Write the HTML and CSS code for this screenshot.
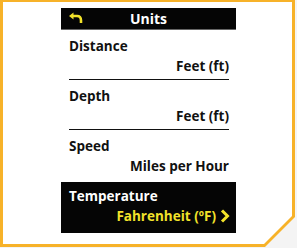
FILE: index.html
```html
<!DOCTYPE html>
<html>
<head>
<meta charset="utf-8">
<link rel="stylesheet" href="styles.css">
</head>
<body>
<div class="frame">
  <div class="inner">
    <div class="screen">
      <div class="header">
        <svg class="back" width="15" height="12" viewBox="0 0 15 12">
          <path d="M1 4 L5.5 0.5 L5.5 7.5 Z" fill="#f2e22a"/>
          <path d="M5 4 H9 Q13 4 13 8.5 V11" fill="none" stroke="#f2e22a" stroke-width="2.6"/>
        </svg>
        <span class="title">Units</span>
      </div>
      <div class="item">
        <div class="label">Distance</div>
        <div class="value">Feet (ft)</div>
      </div>
      <div class="item">
        <div class="label">Depth</div>
        <div class="value">Feet (ft)</div>
      </div>
      <div class="item last">
        <div class="label">Speed</div>
        <div class="value">Miles per Hour</div>
      </div>
      <div class="item selected">
        <div class="label">Temperature</div>
        <div class="value">Fahrenheit (ºF)<svg class="chev" width="10" height="14" viewBox="0 0 10 14"><path d="M2 1.5 L7.5 7 L2 12.5" fill="none" stroke="#f2e22a" stroke-width="3"/></svg></div>
      </div>
    </div>
  </div>
</div>
</body>
</html>
```
FILE: styles.css
```css
html, body {
  margin: 0;
  padding: 0;
}
body {
  background: #f4f4f4;
  width: 297px;
  height: 248px;
  overflow: hidden;
  font-family: "Open Sans", "Noto Sans", sans-serif;
}
.frame {
  width: 295px;
  height: 247px;
  box-sizing: border-box;
  padding: 2px 3px 3px 3px;
  background: #f7b229;
  clip-path: polygon(0 0, 295px 0, 295px 217px, 265px 247px, 0 247px);
}
.inner {
  height: 100%;
  background: #ffffff;
  clip-path: polygon(0 0, 100% 0, 100% 214px, 261px 242px, 0 242px);
  overflow: hidden;
}
.screen {
  width: 175px;
  margin: 6px 0 0 58px;
}
.header {
  height: 21px;
  background: #050505;
  border-bottom: 1px solid #666;
  display: flex;
  align-items: center;
  justify-content: center;
  position: relative;
}
.back {
  position: absolute;
  left: 7px;
  top: 4px;
}
.title {
  color: #ffffff;
  font-weight: 700;
  font-size: 14px;
  line-height: 21px;
}
.item {
  padding: 6px 7px 0 8px;
}
.item .label,
.item .value {
  font-size: 13.5px;
  font-weight: 700;
  line-height: 20px;
  color: #111;
}
.item .value {
  text-align: right;
  padding-bottom: 3px;
  border-bottom: 1.5px solid #111;
}
.item.last .value {
  border-bottom: none;
  padding-bottom: 6px;
}
.item.selected {
  background: #050505;
  padding-top: 4px;
  padding-bottom: 7px;
}
.item.selected .label {
  color: #ffffff;
}
.item.selected .value {
  color: #f2e22a;
  border-bottom: none;
  padding-bottom: 0;
  display: flex;
  justify-content: flex-end;
  align-items: center;
}
.chev {
  margin-left: 4px;
  margin-right: -1px;
}
```
